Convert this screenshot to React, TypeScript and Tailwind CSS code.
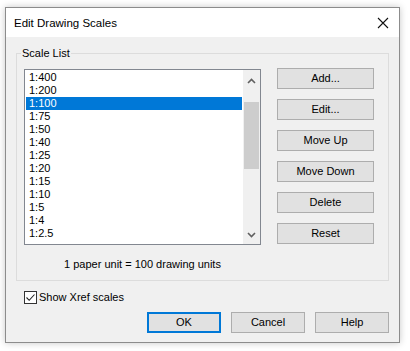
import React from "react";

const scales = ["1:400", "1:200", "1:100", "1:75", "1:50", "1:40", "1:25", "1:20", "1:15", "1:10", "1:5", "1:4", "1:2.5"];
const sideButtons = ["Add...", "Edit...", "Move Up", "Move Down", "Delete", "Reset"];

function Btn({ label, focused, className }: { label: string; focused?: boolean; className?: string }) {
  return (
    <div
      className={`flex items-center justify-center bg-[#e1e1e1] text-[11px] leading-[13px] text-black ${
        focused ? "border-2 border-[#0078d7]" : "border border-[#adadad]"
      } ${className ?? ""}`}
    >
      {label}
    </div>
  );
}

export default function App() {
  return (
    <div className="w-[410px] h-[351px] bg-white overflow-hidden" style={{ fontFamily: '"Liberation Sans", Arial, sans-serif' }}>
      <div className="ml-[5px] mt-[7px] w-[395px] h-[336px] border border-[#8c8c8c] bg-[#f0f0f0] flex flex-col shadow-[0_0_7px_rgba(0,0,0,0.22)]">
        {/* title bar */}
        <div className="h-[29px] bg-white flex items-center justify-between pl-[8px] pr-[8px] shrink-0">
          <span className="text-[11.5px] leading-[14px] text-black">Edit Drawing Scales</span>
          <svg width="12" height="12" viewBox="0 0 12 12" className="mr-[2px]">
            <path d="M1 1 L11 11 M11 1 L1 11" stroke="#111" strokeWidth="1.1" fill="none" />
          </svg>
        </div>

        <div className="flex-1 flex flex-col px-[10px]">
          {/* group box */}
          <div className="relative mt-[16px] h-[228px] border border-[#dcdcdc] flex flex-col pt-[15px] pl-[7px] pr-[15px]">
            <span className="absolute -top-[8px] left-[4px] bg-[#f0f0f0] px-[1px] text-[11px] leading-[14px] text-black">Scale List</span>
            <div className="flex gap-[16px]">
              <div className="flex flex-col items-center">
                {/* list box */}
                <div className="w-[237px] h-[176px] border border-[#828790] bg-white flex">
                  <div className="flex-1 p-[1px] flex flex-col">
                    {scales.map((s, i) => (
                      <div
                        key={s}
                        className={`h-[13px] leading-[13px] pl-[3px] text-[11px] ${i === 2 ? "bg-[#0078d7] text-white" : "text-black"}`}
                      >
                        {s}
                      </div>
                    ))}
                  </div>
                  {/* scrollbar */}
                  <div className="w-[17px] bg-[#f0f0f0] flex flex-col items-center">
                    <div className="h-[17px] w-full flex items-center justify-center mt-[2px]">
                      <svg width="9" height="6" viewBox="0 0 9 6">
                        <path d="M1 5 L4.5 1.5 L8 5" stroke="#606060" strokeWidth="1.6" fill="none" />
                      </svg>
                    </div>
                    <div className="mt-[13px] w-[15px] h-[67px] bg-[#cdcdcd]" />
                    <div className="flex-1" />
                    <div className="h-[17px] w-full flex items-center justify-center mb-[1px]">
                      <svg width="9" height="6" viewBox="0 0 9 6">
                        <path d="M1 1 L4.5 4.5 L8 1" stroke="#606060" strokeWidth="1.6" fill="none" />
                      </svg>
                    </div>
                  </div>
                </div>
                <div className="mt-[12px] text-[11px] leading-[14px] text-black">1 paper unit = 100 drawing units</div>
              </div>
              <div className="flex flex-col gap-[10px] -mt-[1px]">
                {sideButtons.map((b) => (
                  <Btn key={b} label={b} className="w-[97px] h-[21px]" />
                ))}
              </div>
            </div>
          </div>

          {/* checkbox */}
          <div className="mt-[10px] ml-[8px] h-[13px] flex items-center gap-[2px]">
            <div className="w-[13px] h-[13px] border border-[#333] bg-white flex items-center justify-center">
              <svg width="11" height="11" viewBox="0 0 11 11">
                <path d="M1.5 5.5 L4.2 8.3 L9.5 2.5" stroke="#222" strokeWidth="1.1" fill="none" />
              </svg>
            </div>
            <span className="text-[11px] leading-[13px] text-black">Show Xref scales</span>
          </div>

          {/* bottom buttons */}
          <div className="mt-[8px] flex justify-end gap-[10px]">
            <Btn label="OK" focused className="w-[74px] h-[21px]" />
            <Btn label="Cancel" className="w-[74px] h-[21px]" />
            <Btn label="Help" className="w-[74px] h-[21px]" />
          </div>
        </div>
      </div>
    </div>
  );
}
